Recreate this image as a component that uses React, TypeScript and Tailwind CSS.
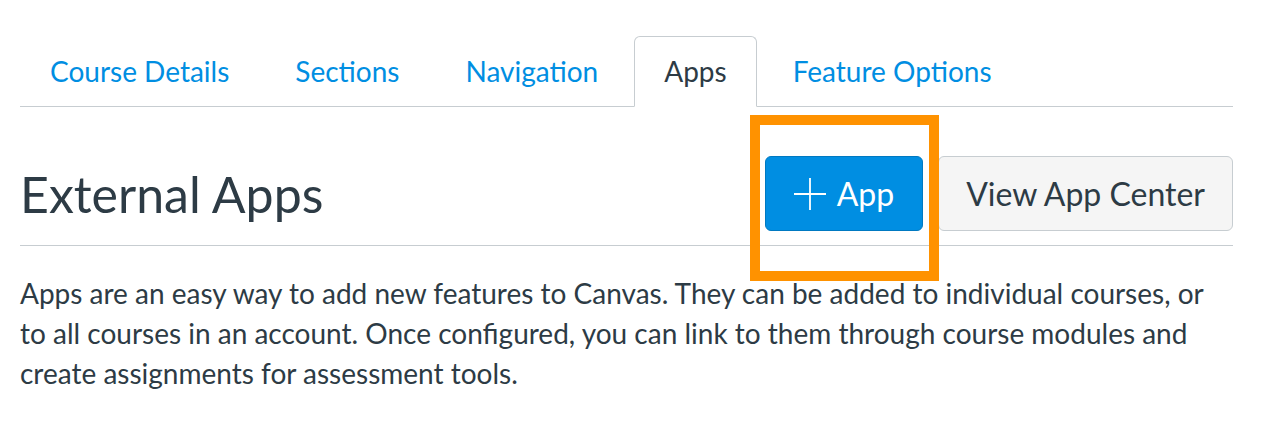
import React from "react";

const tabs = ["Course Details", "Sections", "Navigation", "Apps", "Feature Options"];

const App = () => {
  const active = "Apps";

  return (
    <div className="min-h-screen bg-white pl-5 pr-[33px] pt-9 font-['Lato','Noto_Sans',sans-serif] text-[#2d3b45]">
      {/* TABS */}
      <ul className="flex gap-[6px] border-b border-[#c7cdd1]">
        {tabs.map((tab) => (
          <li key={tab} className="-mb-px">
            <a
              href="#"
              className={`${
                tab === active
                  ? "border-[#c7cdd1] border-b-white bg-white text-[#2d3b45]"
                  : "border-transparent text-[#008ee2]"
              } flex h-[71px] items-center rounded-t-[6px] border px-[29px] text-[28px] leading-[39px]`}
            >
              {tab}
            </a>
          </li>
        ))}
      </ul>

      {/* HEADER */}
      <div className="flex items-center justify-between border-b border-[#c7cdd1] pt-[49px] pb-[14px]">
        <h1 className="text-[50px] leading-[58px] font-normal">External Apps</h1>
        <div className="flex items-center gap-[15px]">
          <div className="relative">
            <button
              type="button"
              className="flex h-[75px] items-center gap-[11px] rounded-[6px] border border-[#0079c1] bg-[#008ee2] px-[28px] text-[32px] text-white"
            >
              <svg width="32" height="32" viewBox="0 0 32 32" fill="none" stroke="currentColor" strokeWidth="1.8">
                <path d="M16 0v32M0 16h32" />
              </svg>
              App
            </button>
            {/* highlight */}
            <div className="pointer-events-none absolute -left-[15px] -top-[41px] h-[166px] w-[189px] border-[10px] border-[#ff9200]" />
          </div>
          <button
            type="button"
            className="flex h-[75px] items-center rounded-[6px] border border-[#c7cdd1] bg-[#f5f5f5] px-[27px] text-[32px] text-[#2d3b45]"
          >
            View App Center
          </button>
        </div>
      </div>

      {/* DESCRIPTION */}
      <p className="mt-[27px] text-[28px] leading-[40px]">
        Apps are an easy way to add new features to Canvas. They can be added to individual courses, or to all courses
        in an account. Once configured, you can link to them through course modules and create assignments for
        assessment tools.
      </p>
    </div>
  );
};

export default App;
